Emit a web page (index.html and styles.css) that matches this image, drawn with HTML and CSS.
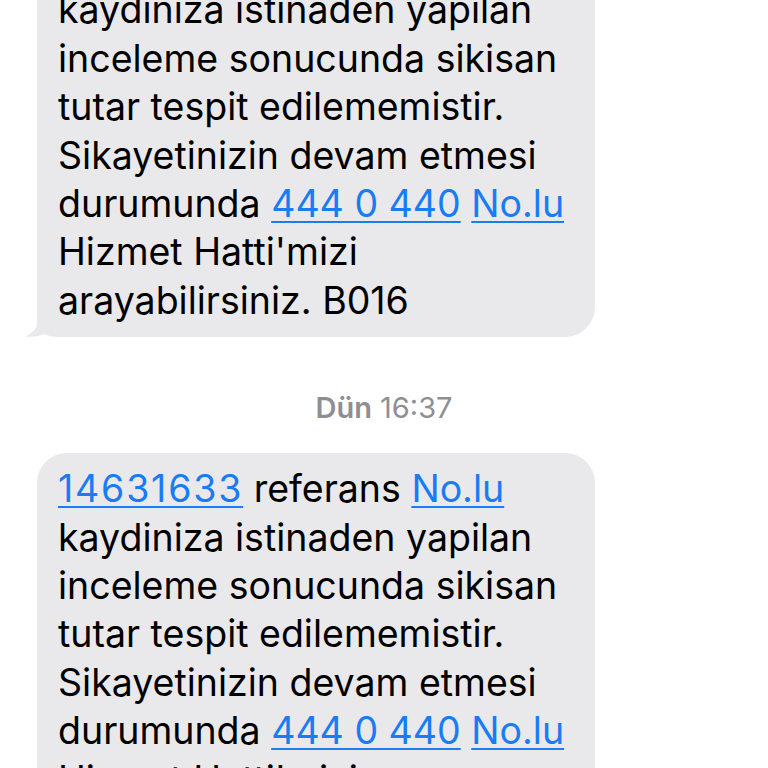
FILE: index.html
```html
<!DOCTYPE html>
<html lang="tr">
<head>
<meta charset="utf-8">
<link rel="stylesheet" href="styles.css">
</head>
<body>
<div class="thread">
  <div class="msg">
    <svg class="tail" width="40" height="30" viewBox="0 0 40 30"><path d="M12 0 L12 16 C12 22 6 27 0 29.5 C8 30.5 15 29 19 27 C23 29 28 30 34 30 L40 30 L40 0 Z" fill="#e9e9eb"/></svg>
    <div class="bubble">
      <p class="text"><a class="link num">14631633</a> referans <a class="link">No.lu</a><br>kaydiniza istinaden yapilan<br>inceleme sonucunda sikisan<br>tutar tespit edilememistir.<br>Sikayetinizin devam etmesi<br>durumunda <a class="link">444 0 440</a> <a class="link">No.lu</a><br>Hizmet Hatti'mizi<br>arayabilirsiniz. B016</p>
    </div>
  </div>
  <div class="stamp"><span class="day">Dün</span> 16:37</div>
  <div class="msg">
    <div class="bubble">
      <p class="text"><a class="link num">14631633</a> referans <a class="link">No.lu</a><br>kaydiniza istinaden yapilan<br>inceleme sonucunda sikisan<br>tutar tespit edilememistir.<br>Sikayetinizin devam etmesi<br>durumunda <a class="link">444 0 440</a> <a class="link">No.lu</a><br>Hizmet Hatti'mizi<br>arayabilirsiniz. B016</p>
    </div>
  </div>
</div>
</body>
</html>
```
FILE: styles.css
```css
html, body { margin: 0; padding: 0; background: #ffffff; }
body { width: 768px; height: 768px; overflow: hidden; font-family: Inter, "Liberation Sans", sans-serif; }
.thread { display: flex; flex-direction: column; padding-left: 37px; margin-top: -74px; }
.msg { position: relative; display: flex; isolation: isolate; }
.bubble { background: #e9e9eb; border-radius: 30px; width: 558px; box-sizing: border-box; padding: 12px 0 12px 21px; }
.text { margin: 0; font-size: 37.5px; line-height: 48.4px; color: #000; letter-spacing: 0; }
.link { color: #1a7cf4; text-decoration: underline; text-decoration-thickness: 2px; text-underline-offset: 4px; }
.num { letter-spacing: 1.8px; }
.tail { position: absolute; left: -12px; bottom: 0; z-index: -1; }
.stamp { margin: 53px 0 28px; width: 694px; text-align: center; font-size: 29px; color: #8e8e93; }
.day { font-weight: 600; }
```
